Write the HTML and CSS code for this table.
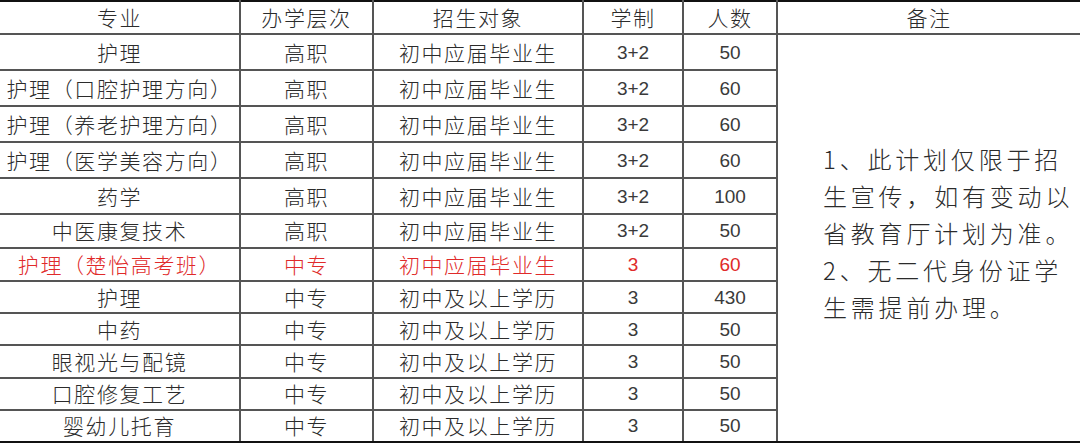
FILE: index.html
```html
<!DOCTYPE html>
<html lang="zh-CN">
<head>
<meta charset="utf-8">
<title>招生计划</title>
<link rel="stylesheet" href="styles.css">
</head>
<body>
<table class="plan">
  <colgroup>
    <col class="c-major"><col class="c-level"><col class="c-target"><col class="c-years"><col class="c-count"><col class="c-note">
  </colgroup>
  <thead>
    <tr class="r-head">
      <th>专业</th><th>办学层次</th><th>招生对象</th><th>学制</th><th>人数</th><th>备注</th>
    </tr>
  </thead>
  <tbody>
    <tr class="r-tall"><td>护理</td><td>高职</td><td>初中应届毕业生</td><td class="num">3+2</td><td class="num">50</td>
      <td class="note" rowspan="12"><p>1、此计划仅限于招生宣传，如有变动以省教育厅计划为准。</p><p>2、无二代身份证学生需提前办理。</p></td></tr>
    <tr class="r-tall"><td>护理（口腔护理方向）</td><td>高职</td><td>初中应届毕业生</td><td class="num">3+2</td><td class="num">60</td></tr>
    <tr class="r-tall"><td>护理（养老护理方向）</td><td>高职</td><td>初中应届毕业生</td><td class="num">3+2</td><td class="num">60</td></tr>
    <tr class="r-tall"><td>护理（医学美容方向）</td><td>高职</td><td>初中应届毕业生</td><td class="num">3+2</td><td class="num">60</td></tr>
    <tr class="r-tall"><td>药学</td><td>高职</td><td>初中应届毕业生</td><td class="num">3+2</td><td class="num">100</td></tr>
    <tr class="r-mid"><td>中医康复技术</td><td>高职</td><td>初中应届毕业生</td><td class="num">3+2</td><td class="num">50</td></tr>
    <tr class="r-mid red"><td>护理（楚怡高考班）</td><td>中专</td><td>初中应届毕业生</td><td class="num">3</td><td class="num">60</td></tr>
    <tr class="r-short"><td>护理</td><td>中专</td><td>初中及以上学历</td><td class="num">3</td><td class="num">430</td></tr>
    <tr class="r-short"><td>中药</td><td>中专</td><td>初中及以上学历</td><td class="num">3</td><td class="num">50</td></tr>
    <tr class="r-short"><td>眼视光与配镜</td><td>中专</td><td>初中及以上学历</td><td class="num">3</td><td class="num">50</td></tr>
    <tr class="r-short"><td>口腔修复工艺</td><td>中专</td><td>初中及以上学历</td><td class="num">3</td><td class="num">50</td></tr>
    <tr class="r-short"><td>婴幼儿托育</td><td>中专</td><td>初中及以上学历</td><td class="num">3</td><td class="num">50</td></tr>
  </tbody>
</table>
</body>
</html>
```

FILE: styles.css
```css
html, body {
  margin: 0;
  padding: 0;
  background: #ffffff;
}

body {
  width: 1080px;
  height: 443px;
  overflow: hidden;
  font-family: "Noto Sans CJK SC", "Noto Sans", sans-serif;
  color: #2b2b2b;
}

.plan {
  width: 1080px;
  border-collapse: collapse;
  table-layout: fixed;
  border-top: 2px solid #111;
  border-bottom: 2px solid #111;
}

.c-major { width: 240px; }
.c-level { width: 133px; }
.c-target { width: 210px; }
.c-years { width: 100px; }
.c-count { width: 94px; }
.c-note { width: 303px; }

.plan th,
.plan td {
  padding: 0;
  text-align: center;
  vertical-align: middle;
  font-weight: 300;
  font-size: 21px;
  letter-spacing: 1.6px;
  line-height: 1;
  white-space: nowrap;
  border: 2px solid #555;
}

.plan tr > :first-child {
  border-left: none;
}

.plan tr > :last-child {
  border-right: none;
}

.plan thead th {
  border-top: 2px solid #111;
}

.plan tbody tr:last-child td {
  border-bottom: 2px solid #111;
}

.r-head { height: 33px; }
.r-tall { height: 36px; }
.r-mid { height: 33.5px; }
.r-short { height: 32.2px; }

.plan td.num {
  font-family: "Liberation Sans", Arial, sans-serif;
  font-weight: 400;
  font-size: 19px;
  letter-spacing: 0;
  color: #3a3a3a;
}

.plan .red td,
.plan .red td.num {
  color: #e02a2a;
}

.plan td.note {
  text-align: left;
  white-space: normal;
  padding: 0 0 10px 45px;
  border-bottom: 2px solid #111;
  font-size: 24px;
  letter-spacing: 3.8px;
  line-height: 37px;
}

.note p {
  margin: 0;
}
```
